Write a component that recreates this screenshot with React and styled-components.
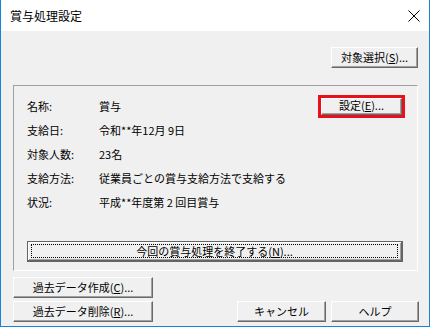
import React from 'react';
import styled, { createGlobalStyle, css } from 'styled-components';

const GlobalStyle = createGlobalStyle`
    html, body {
        margin: 0;
        padding: 0;
        background: #ffffff;
    }
    * {
        box-sizing: border-box;
    }
`;

const font = `"Noto Sans CJK JP", "Liberation Sans", sans-serif`;

const Window = styled.div`
    width: 430px;
    height: 327px;
    display: flex;
    flex-direction: column;
    border: 1px solid #1883d7;
    border-top: none;
    font-family: ${font};
    color: #000;
`;
const TitleBar = styled.div`
    height: 31px;
    flex: none;
    display: flex;
    align-items: center;
    justify-content: space-between;
    padding: 0 9px 0 9px;
    background: #ffffff;
    font-size: 12px;
    line-height: 1;
`;
const Body = styled.div`
    flex: 1;
    display: flex;
    flex-direction: column;
    padding: 16px 11px 0 12px;
    background: #f0f0f0;
`;
const TopRow = styled.div`
    display: flex;
    justify-content: flex-end;
`;
const GroupBox = styled.div`
    margin-top: 17px;
    height: 186px;
    display: flex;
    flex-direction: column;
    padding: 8px 14px 8px 13px;
    border: 1px solid;
    border-color: #a0a0a0 #ffffff #ffffff #a0a0a0;
`;
const Row = styled.div`
    height: 24px;
    display: flex;
    align-items: center;
    font-size: 11px;
    line-height: 1;
`;
const Label = styled.span`
    width: 72px;
    flex: none;
`;
const Value = styled.span`
    flex: 1;
    white-space: nowrap;
`;
const RedFrame = styled.span`
    display: flex;
    margin-right: -2px;
    border: 3px solid #e8101c;
`;

const raised = css`
    border: 1px solid;
    border-color: #ffffff #696969 #696969 #ffffff;
    box-shadow: inset -1px -1px 0 #a0a0a0;
`;

const Button = styled.button`
    width: ${p => p.$w}px;
    height: ${p => p.$h || 21}px;
    flex: none;
    display: flex;
    align-items: center;
    justify-content: center;
    padding: 0 0 1px;
    background: #f0f0f0;
    font-family: ${font};
    font-size: 11px;
    line-height: 1;
    color: #000;
    ${raised}
    u {
        text-decoration: underline;
        text-underline-offset: 1px;
    }
`;
const DefaultButton = styled.button`
    margin-top: auto;
    height: 21px;
    display: flex;
    padding: 2px 3px;
    background: #f0f0f0;
    border: 1px solid #646464;
    border-right-width: 2px;
    border-bottom-width: 2px;
    box-shadow: inset 1px 1px 0 #ffffff, inset -1px -1px 0 #a0a0a0;
    font-family: ${font};
    font-size: 11px;
    line-height: 1;
    color: #000;
    u {
        text-decoration: underline;
        text-underline-offset: 1px;
    }
`;
const FocusRect = styled.span`
    flex: 1;
    display: flex;
    align-items: center;
    justify-content: center;
    border: 1px dotted #000;
`;
const Footer = styled.div`
    margin-top: 6px;
    display: flex;
    justify-content: space-between;
    align-items: flex-end;
`;
const Stack = styled.div`
    display: flex;
    flex-direction: column;
    gap: 3px;
`;
const ButtonGroup = styled.div`
    display: flex;
    gap: 5px;
    margin-right: -1px;
`;

const CloseIcon = () => (
    <svg width="12" height="12" viewBox="0 0 12 12">
        <path d="M0.5 0.5 L11.5 11.5 M11.5 0.5 L0.5 11.5" stroke="#000" strokeWidth="1" fill="none" />
    </svg>
);

const info = [
    { label: '名称:', value: '賞与' },
    { label: '支給日:', value: '令和**年12月 9日' },
    { label: '対象人数:', value: '23名' },
    { label: '支給方法:', value: '従業員ごとの賞与支給方法で支給する' },
    { label: '状況:', value: '平成**年度第 2 回目賞与' },
];

const App = () => (
    <Window>
        <GlobalStyle />
        <TitleBar>
            <span>賞与処理設定</span>
            <CloseIcon />
        </TitleBar>
        <Body>
            <TopRow>
                <Button $w={87}>対象選択(<u>S</u>)...</Button>
            </TopRow>
            <GroupBox>
                {info.map((row, idx) => (
                    <Row key={row.label}>
                        <Label>{row.label}</Label>
                        <Value>{row.value}</Value>
                        {idx === 0 && (
                            <RedFrame>
                                <Button $w={81} $h={17}>設定(<u>E</u>)...</Button>
                            </RedFrame>
                        )}
                    </Row>
                ))}
                <DefaultButton>
                    <FocusRect>今回の賞与処理を終了する(<u>N</u>)...</FocusRect>
                </DefaultButton>
            </GroupBox>
            <Footer>
                <Stack>
                    <Button $w={140}>過去データ作成(<u>C</u>)...</Button>
                    <Button $w={140}>過去データ削除(<u>R</u>)...</Button>
                </Stack>
                <ButtonGroup>
                    <Button $w={89}>キャンセル</Button>
                    <Button $w={88}>ヘルプ</Button>
                </ButtonGroup>
            </Footer>
        </Body>
    </Window>
);

export default App;
